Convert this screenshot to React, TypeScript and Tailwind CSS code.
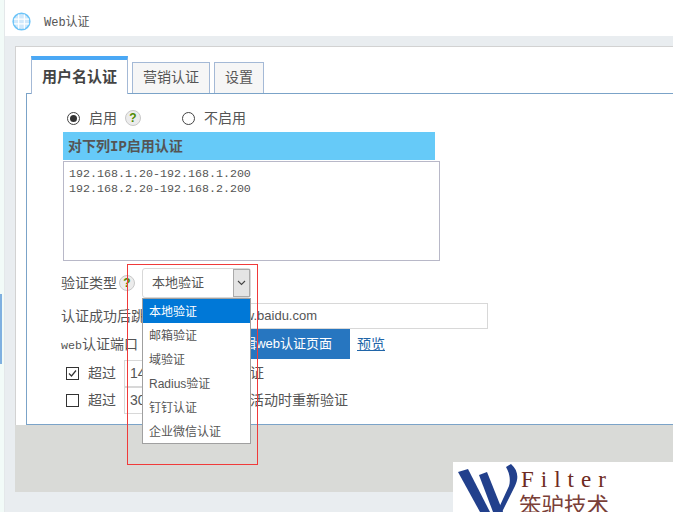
import React from "react";

const sans = "font-['Liberation_Sans','Noto_Sans_CJK_SC',sans-serif]";
const mono = "font-['Liberation_Mono','Noto_Sans_CJK_SC',monospace]";

function Help() {
  return (
    <span className="flex h-[16px] w-[16px] items-center justify-center rounded-full border border-[#c8c8c8] bg-[#ececec] text-[12px] font-bold leading-none text-[#4f8a00]">
      ?
    </span>
  );
}

function Radio({ on }: { on?: boolean }) {
  return (
    <span className="flex h-[13px] w-[13px] items-center justify-center rounded-full border border-[#444] bg-white">
      {on && <span className="h-[7px] w-[7px] rounded-full bg-[#333]" />}
    </span>
  );
}

function Check({ on }: { on?: boolean }) {
  return (
    <span className="flex h-[13px] w-[13px] items-center justify-center border border-[#333] bg-white">
      {on && (
        <svg width="11" height="11" viewBox="0 0 11 11" fill="none" stroke="#333" strokeWidth="1.2">
          <path d="M2 5.5 L4.5 8 L9 2.5" />
        </svg>
      )}
    </span>
  );
}

function Globe() {
  return (
    <svg width="19" height="19" viewBox="0 0 20 20" fill="none">
      <circle cx="10" cy="10" r="8.8" fill="#cfe8fb" stroke="#6cc4f8" strokeWidth="1.6" />
      <path d="M2 7.5h16M2 12.5h16M7 2.5v15M13 2.5v15" stroke="#ffffff" strokeWidth="1.2" />
    </svg>
  );
}

const options = ["邮箱验证", "域验证", "Radius验证", "钉钉认证", "企业微信认证"];

export default function App() {
  return (
    <div className={`relative h-[512px] w-[673px] overflow-hidden bg-[#e9edf0] text-[#555] ${sans}`}>
      <div className="flex h-full">
        <div className="flex w-[5px] flex-col border-r border-[#e4e8ea] bg-[#f2fbf8]">
          <div className="h-[294px]" />
          <div className="h-[70px] w-[2px] bg-[#7fb0e0]" />
        </div>
        <div className="flex min-w-0 flex-1 flex-col">
          <div className="flex h-[36px] items-start bg-white pl-[7px] pt-[12px]">
            <Globe />
            <span className={`ml-[13px] mt-[2px] text-[12px] leading-[18px] text-[#555] ${mono}`}>Web认证</span>
          </div>
          <div className="flex flex-1 flex-col pl-[10px] pt-[10px]">
            <div className="flex h-[446px] flex-col bg-[#d9dad7]">
              <div className="h-[379px] border-t border-l border-[#d2d2d2] bg-white pl-[10px] pt-[9px]">
                <div className="flex h-[37px] items-end pl-[5px]">
                  <div className="relative z-10 mb-[-1px] flex h-[38px] w-[97px] items-center justify-center border-x border-[#a4b9d6] border-t-[4px] border-t-[#4aa8f5] bg-white text-[15px] font-bold text-[#444]">
                    用户名认证
                  </div>
                  <div className="ml-[4px] flex h-[31px] w-[78px] items-center justify-center border border-b-0 border-[#a4b9d6] bg-[#f6f6f6] pb-[2px] text-[14px]">
                    营销认证
                  </div>
                  <div className="ml-[4px] flex h-[31px] w-[50px] items-center justify-center border border-b-0 border-[#a4b9d6] bg-[#f6f6f6] pb-[2px] text-[14px]">
                    设置
                  </div>
                </div>
                <div className="h-[332px] border border-r-0 border-[#7ba3c8] bg-white pl-[36px] pt-[14px] text-[14px]">
                  <div className="flex h-[20px] items-center pl-[4px]">
                    <Radio on />
                    <span className="ml-[9px]">启用</span>
                    <span className="ml-[8px]"><Help /></span>
                    <span className="ml-[41px]"><Radio /></span>
                    <span className="ml-[9px]">不启用</span>
                  </div>
                  <div className={`mt-[4px] flex h-[28px] w-[372px] items-center bg-[#66caf8] pl-[5px] pt-[2px] text-[14px] font-bold text-[#555] ${mono}`}>
                    对下列IP启用认证
                  </div>
                  <div className={`mt-[1px] h-[100px] w-[377px] border border-[#b8b8c8] bg-white pl-[5px] pt-[5px] text-[11.67px] leading-[15px] ${mono}`}>
                    <div>192.168.1.20-192.168.1.200</div>
                    <div>192.168.2.20-192.168.2.200</div>
                  </div>
                  <div className="mt-[7px] ml-[-2px] flex h-[30px] items-center">
                    <span>验证类型</span>
                    <span className="ml-[2px]"><Help /></span>
                    <div className="ml-[7px] flex h-[30px] w-[109px] items-center justify-between rounded-[3px] border border-[#d8d8d8] bg-white pl-[9px] text-[13px]">
                      <span>本地验证</span>
                      <span className="flex h-[28px] w-[17px] items-center justify-center border border-[#aaa] bg-[#e4e4e4]">
                        <svg width="9" height="6" viewBox="0 0 9 6" fill="none" stroke="#444" strokeWidth="1.1">
                          <path d="M1 1l3.5 3.5L8 1" />
                        </svg>
                      </span>
                    </div>
                  </div>
                  <div className="ml-[-2px] mt-[5px] flex h-[26px] items-center">
                    <span>认证成功后跳转地址</span>
                    <div className="ml-[30px] flex h-[26px] w-[271px] items-center border border-[#d8d8d8] pl-[8px] text-[13px]">
                      www.baidu.com
                    </div>
                  </div>
                  <div className="ml-[-2px] flex h-[30px] items-center">
                    <span className={`pt-[2px] text-[14px] ${mono}`}>
                      <span className="text-[11.67px]">web</span>认证端口
                    </span>
                    <div className="ml-[12px] flex h-[30px] w-[200px] items-center justify-end bg-[#2776c0] pr-[18px] text-[13px] text-white">
                      编辑web认证页面
                    </div>
                    <span className="ml-[7px] text-[#2065a8] underline">预览</span>
                  </div>
                  <div className="ml-[3px] flex h-[28px] items-center">
                    <Check on />
                    <span className="ml-[9px]">超过</span>
                    <div className="ml-[8px] flex h-[27px] w-[98px] items-center border border-[#d8d8d8] pl-[5px]">14400</div>
                    <span>秒认证</span>
                  </div>
                  <div className="ml-[3px] flex h-[27px] items-center">
                    <Check />
                    <span className="ml-[9px]">超过</span>
                    <div className="ml-[8px] flex h-[27px] w-[98px] items-center border border-[#d8d8d8] pl-[5px]">300</div>
                    <span>秒不活动时重新验证</span>
                  </div>
                </div>
              </div>
            </div>
          </div>
        </div>
      </div>

      <div className="absolute left-[142px] top-[298px] h-[146px] w-[109px] border border-[#a0a0a0] bg-white text-[12px] text-[#555]">
        <div className="flex h-[24px] items-center bg-[#0078d7] pl-[6px] pt-[1px] text-white">本地验证</div>
        {options.map((o) => (
          <div key={o} className="flex h-[24px] items-center pl-[6px] pt-[1px]">{o}</div>
        ))}
      </div>
      <div className="absolute left-[127px] top-[264px] h-[201px] w-[131px] border border-[#f03a3a]" />

      <div className="absolute left-[453px] top-[462px] h-[50px] w-[220px] overflow-hidden bg-white">
        <svg className="absolute left-0 top-0" width="66" height="50" viewBox="0 0 66 50" fill="#22408c">
          <path d="M5 10 L15 7 L37 50 L27 50 Z" />
          <path d="M26 13 L34 10 L50 50 L40 50 Z" />
          <path d="M44 50 L56 24 C58 17 56 10 53 5 L58 2 C65 8 66 16 62 24 L49 50 Z" />
        </svg>
        <div className="absolute left-[68px] top-[6px] font-['Liberation_Serif',serif] text-[23px] leading-[24px] tracking-[7px] text-[#6e2a22]">
          Filter
        </div>
        <div className="absolute left-[66px] top-[30px] font-['Noto_Sans_CJK_SC',sans-serif] text-[22.5px] leading-[24px] text-[#7a4038]">
          笨驴技术
        </div>
      </div>
    </div>
  );
}
